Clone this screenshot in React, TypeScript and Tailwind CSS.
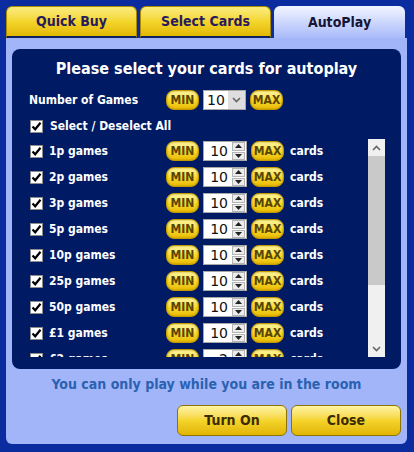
const font = { fontFamily: '"DejaVu Sans Condensed", "DejaVu Sans", Verdana, sans-serif' };

const games = ['1p', '2p', '3p', '5p', '10p', '25p', '50p', '£1', '£2'];

function Check() {
  return (
    <span className="flex h-[13px] w-[13px] shrink-0 items-center justify-center border border-[#8c8c8c] bg-white">
      <svg width="11" height="11" viewBox="0 0 11 11">
        <path d="M1.5 5.5 L4.2 8.3 L9.5 1.8" fill="none" stroke="#000" strokeWidth="2.2" />
      </svg>
    </span>
  );
}

function Pill({ label }: { label: string }) {
  return (
    <button className="flex h-[20px] w-[33px] shrink-0 items-center justify-center rounded-[8px] border border-[#c39a00] bg-linear-to-b from-[#fff7a0] via-[#f8da2a] to-[#e9bb00] text-[12px] font-bold text-[#5a4500] shadow-[inset_0_0_2px_#b08a00]">
      {label}
    </button>
  );
}

function Spinner({ value }: { value: string }) {
  return (
    <div className="flex h-[20px] w-[44px] shrink-0 items-center border border-[#a8a8a8] bg-white">
      <span className="flex-1 pr-[4px] text-right text-[14px] leading-none text-[#111]" style={{ fontFamily: '"DejaVu Sans", sans-serif' }}>
        {value}
      </span>
      <div className="mr-px flex h-[18px] w-[13px] flex-col gap-px">
        <span className="flex flex-1 items-center justify-center border border-[#b4b4b4] bg-[#ececec]">
          <svg width="7" height="4" viewBox="0 0 7 4"><path d="M0 4 L3.5 0 L7 4 Z" fill="#222" /></svg>
        </span>
        <span className="flex flex-1 items-center justify-center border border-[#b4b4b4] bg-[#ececec]">
          <svg width="7" height="4" viewBox="0 0 7 4"><path d="M0 0 L3.5 4 L7 0 Z" fill="#222" /></svg>
        </span>
      </div>
    </div>
  );
}

function Chevron({ up }: { up?: boolean }) {
  return (
    <svg width="9" height="6" viewBox="0 0 9 6">
      <path d={up ? 'M1 5 L4.5 1.5 L8 5' : 'M1 1 L4.5 4.5 L8 1'} fill="none" stroke="#666" strokeWidth="1.6" />
    </svg>
  );
}

function Tab({ label, active }: { label: string; active?: boolean }) {
  return (
    <div
      className={
        active
          ? 'flex h-[32px] w-[131px] items-center justify-center rounded-t-[6px] bg-linear-to-b from-[#f2f5ff] to-[#a9baf9] text-[14px] font-bold text-[#151535]'
          : 'flex h-[32px] w-[131px] items-center justify-center rounded-t-[6px] border border-b-2 border-[#a88a00] border-b-[#0d2060] bg-linear-to-b from-[#fbec7c] via-[#f4d52a] to-[#e2b800] text-[14px] font-bold text-[#2a1a5e]'
      }
    >
      {label}
    </div>
  );
}

function BigButton({ label }: { label: string }) {
  return (
    <button className="h-[31px] w-[110px] rounded-[6px] border border-[#8d7300] bg-linear-to-b from-[#fff4a0] via-[#f5d42a] to-[#e1b400] text-[14px] font-bold text-[#3d2b00]">
      {label}
    </button>
  );
}

export default function App() {
  return (
    <div className="flex h-[452px] w-[414px] flex-col bg-[#0b2c9e] pl-[6px] pr-[7px] pt-[6px]" style={font}>
      <div className="flex gap-[3px]">
        <Tab label="Quick Buy" />
        <Tab label="Select Cards" />
        <Tab label="AutoPlay" active />
      </div>
      <div className="flex h-[406px] flex-col rounded-b-[6px] bg-[#a3b5f9] px-[6px] pt-[11px]">
        <div className="flex flex-col rounded-[8px] bg-[#001a64] pt-[8px] pb-[11px] text-white">
          <h1 className="text-center text-[16px] font-bold leading-[24px]">Please select your cards for autoplay</h1>
          <div className="mt-[9px] flex h-[20px] items-center pl-[17px]">
            <span className="w-[137px] text-[12px] font-bold">Number of Games</span>
            <div className="flex items-center gap-[4px]">
              <Pill label="MIN" />
              <div className="flex h-[20px] w-[43px] items-center border border-[#a8a8a8] bg-white">
                <span className="flex-1 pl-[3px] text-[14px] leading-none text-[#111]" style={{ fontFamily: '"DejaVu Sans", sans-serif' }}>10</span>
                <span className="flex h-[18px] w-[17px] items-center justify-center bg-[#dedede]">
                  <Chevron />
                </span>
              </div>
              <Pill label="MAX" />
            </div>
          </div>
          <div className="mt-[6px] flex h-[20px] items-center gap-[7px] pl-[18px]">
            <Check />
            <span className="text-[12px] font-bold">Select / Deselect All</span>
          </div>
          <div className="mt-[2px] flex h-[220px] pr-[16px]">
            <div className="h-[219px] flex-1 overflow-hidden pl-[18px]">
              {games.map((g, i) => (
                <div key={g} className="flex h-[26px] items-center">
                  <div className="flex w-[136px] items-center gap-[6px]">
                    <Check />
                    <span className="text-[12px] font-bold">{g} games</span>
                  </div>
                  <div className="flex items-center gap-[4px]">
                    <Pill label="MIN" />
                    <Spinner value={i === 8 ? '2' : '10'} />
                    <Pill label="MAX" />
                  </div>
                  <span className="ml-[6px] text-[12px] font-bold">cards</span>
                </div>
              ))}
            </div>
            <div className="my-px flex w-[17px] flex-col bg-[#f0f0f0]">
              <span className="flex h-[17px] items-center justify-center"><Chevron up /></span>
              <span className="h-[129px] bg-[#c9c9c9]"></span>
              <span className="flex-1"></span>
              <span className="flex h-[17px] items-center justify-center"><Chevron /></span>
            </div>
          </div>
        </div>
        <p className="mt-[5px] text-center text-[14px] font-bold leading-[20px] text-[#2a62b0]">
          You can only play while you are in the room
        </p>
        <div className="mt-[11px] flex justify-end gap-[4px]">
          <BigButton label="Turn On" />
          <BigButton label="Close" />
        </div>
      </div>
    </div>
  );
}
